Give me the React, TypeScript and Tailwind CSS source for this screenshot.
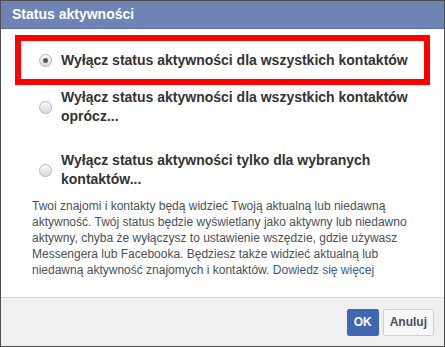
import React from 'react';

// Radio dot, grey gradient like the old Facebook dialog
const Radio: React.FC<{ checked?: boolean }> = ({ checked }) => (
  <span className="relative inline-flex h-[13px] w-[13px] shrink-0 items-center justify-center rounded-full border border-[#b4b4b4] bg-gradient-to-b from-[#fafafa] to-[#d9d9d9]">
    {checked && <span className="h-[5px] w-[5px] rounded-full bg-[#555]" />}
  </span>
);

const options = [
  { label: 'Wyłącz status aktywności dla wszystkich kontaktów', checked: true },
  { label: 'Wyłącz status aktywności dla wszystkich kontaktów oprócz...', checked: false },
  { label: 'Wyłącz status aktywności tylko dla wybranych kontaktów...', checked: false },
];

const App: React.FC = () => {
  return (
    <div
      className="flex h-[347px] w-[445px] flex-col border border-[#4e4e4e] bg-white"
      style={{ fontFamily: '"Liberation Sans", Arial, sans-serif' }}
    >
      {/* Header */}
      <div className="flex h-[28px] items-center border-b border-[#5b74a8] bg-[#6d84b4] px-[11px] text-[14px] font-bold text-white">
        Status aktywności
      </div>

      {/* Body */}
      <div className="flex-1 px-[14px] pt-[6px]">
        {/* Selected option, outlined in red */}
        <div className="flex h-[50px] items-center gap-[9px] border-[6px] border-[#ff0000] pl-[18px]">
          <Radio checked />
          <span className="text-[14px] font-bold leading-[18px] text-[#333]">{options[0].label}</span>
        </div>

        <div className="flex flex-col gap-[25px] pl-[24px] pr-[6px] pt-[3px]">
          {options.slice(1).map((o) => (
            <div key={o.label} className="flex items-center gap-[9px]">
              <Radio checked={o.checked} />
              <span className="text-[14px] font-bold leading-[19px] text-[#333]">{o.label}</span>
            </div>
          ))}
        </div>

        <p className="mt-[9px] pl-[17px] pr-[2px] text-[12px] leading-[16px] text-[#4b4f56]">
          Twoi znajomi i kontakty będą widzieć Twoją aktualną lub niedawną aktywność. Twój status będzie
          wyświetlany jako aktywny lub niedawno aktywny, chyba że wyłączysz to ustawienie wszędzie, gdzie
          używasz Messengera lub Facebooka. Będziesz także widzieć aktualną lub niedawną aktywność
          znajomych i kontaktów. <a className="text-[#365899]">Dowiedz się więcej</a>
        </p>
      </div>

      {/* Footer */}
      <div className="flex h-[49px] items-center justify-end gap-[4px] border-t border-[#d5d5d5] bg-[#f0f0f0] pr-[10px]">
        <button className="h-[27px] rounded-[2px] border border-[#4267b2] bg-[#4267b2] px-[6px] text-[12px] font-bold text-white">
          OK
        </button>
        <button className="h-[27px] rounded-[2px] border border-[#ced0d4] bg-[#f6f7f9] px-[6px] text-[12px] font-bold text-[#4b4f56]">
          Anuluj
        </button>
      </div>
    </div>
  );
};

export default App;
